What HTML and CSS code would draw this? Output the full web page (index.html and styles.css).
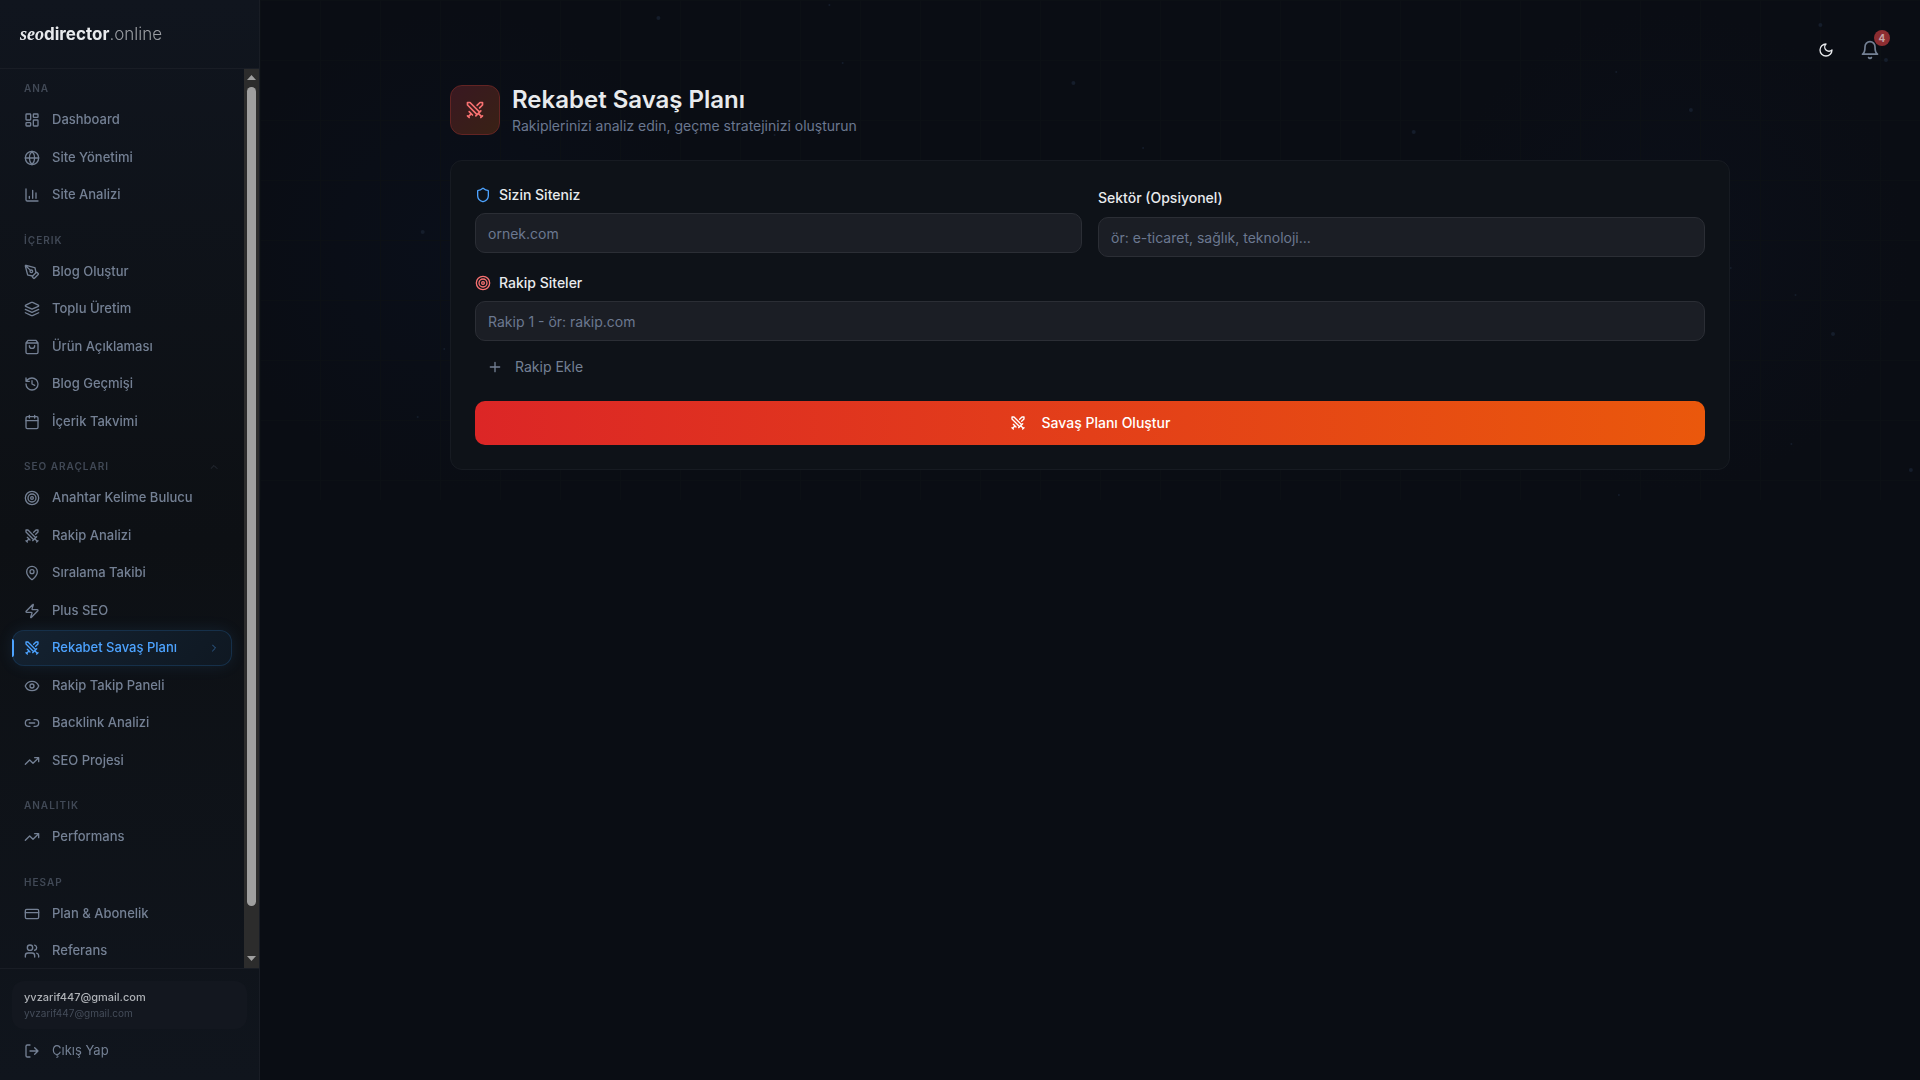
FILE: index.html
```html
<!DOCTYPE html>
<html lang="tr">
<head>
<meta charset="utf-8">
<meta name="viewport" content="width=device-width, initial-scale=1">
<title>Rekabet Savaş Planı</title>
<link rel="stylesheet" href="styles.css">
</head>
<body>
<svg class="sprite" aria-hidden="true">
  <symbol id="dashboard" viewBox="0 0 24 24"><rect x="3" y="3" width="7" height="9" rx="1"/><rect x="14" y="3" width="7" height="5" rx="1"/><rect x="14" y="12" width="7" height="9" rx="1"/><rect x="3" y="16" width="7" height="5" rx="1"/></symbol>
  <symbol id="globe" viewBox="0 0 24 24"><circle cx="12" cy="12" r="10"/><path d="M12 2a14.5 14.5 0 0 0 0 20 14.5 14.5 0 0 0 0-20M2 12h20"/></symbol>
  <symbol id="chart" viewBox="0 0 24 24"><path d="M3 3v16a2 2 0 0 0 2 2h16M18 17V9M13 17V5M8 17v-3"/></symbol>
  <symbol id="pen" viewBox="0 0 24 24"><path d="M15.707 21.293a1 1 0 0 1-1.414 0l-1.586-1.586a1 1 0 0 1 0-1.414l5.586-5.586a1 1 0 0 1 1.414 0l1.586 1.586a1 1 0 0 1 0 1.414z"/><path d="m18 13-1.375-6.874a1 1 0 0 0-.746-.776L3.235 2.028a1 1 0 0 0-1.207 1.207L5.35 15.879a1 1 0 0 0 .776.746L13 18M2.3 2.3l7.286 7.286"/><circle cx="11" cy="11" r="2"/></symbol>
  <symbol id="layers" viewBox="0 0 24 24"><path d="M12.83 2.18a2 2 0 0 0-1.66 0L2.6 6.08a1 1 0 0 0 0 1.83l8.58 3.91a2 2 0 0 0 1.66 0l8.58-3.9a1 1 0 0 0 0-1.83Z"/><path d="m22 17.65-9.17 4.16a2 2 0 0 1-1.66 0L2 17.65M22 12.65l-9.17 4.16a2 2 0 0 1-1.66 0L2 12.65"/></symbol>
  <symbol id="bag" viewBox="0 0 24 24"><path d="M6 2 3 6v14a2 2 0 0 0 2 2h14a2 2 0 0 0 2-2V6l-3-4ZM3 6h18M16 10a4 4 0 0 1-8 0"/></symbol>
  <symbol id="history" viewBox="0 0 24 24"><path d="M3 12a9 9 0 1 0 9-9 9.75 9.75 0 0 0-6.74 2.74L3 8M3 3v5h5M12 7v5l4 2"/></symbol>
  <symbol id="calendar" viewBox="0 0 24 24"><path d="M8 2v4M16 2v4M3 10h18"/><rect x="3" y="4" width="18" height="18" rx="2"/></symbol>
  <symbol id="target" viewBox="0 0 24 24"><circle cx="12" cy="12" r="10"/><circle cx="12" cy="12" r="6"/><circle cx="12" cy="12" r="2"/></symbol>
  <symbol id="swords" viewBox="0 0 24 24"><path d="M14.5 17.5 3 6V3h3l11.5 11.5M13 19l6-6M16 16l4 4M19 21l2-2M14.5 6.5 18 3h3v3l-3.5 3.5M5 14l4 4M7 17l-3 3M3 19l2 2"/></symbol>
  <symbol id="pin" viewBox="0 0 24 24"><path d="M20 10c0 4.993-5.539 10.193-7.399 11.799a1 1 0 0 1-1.202 0C9.539 20.193 4 14.993 4 10a8 8 0 0 1 16 0"/><circle cx="12" cy="10" r="3"/></symbol>
  <symbol id="zap" viewBox="0 0 24 24"><path d="M4 14a1 1 0 0 1-.78-1.63l9.9-10.2a.5.5 0 0 1 .86.46l-1.92 6.02A1 1 0 0 0 13 10h7a1 1 0 0 1 .78 1.63l-9.9 10.2a.5.5 0 0 1-.86-.46l1.92-6.02A1 1 0 0 0 11 14z"/></symbol>
  <symbol id="eye" viewBox="0 0 24 24"><path d="M2.062 12.348a1 1 0 0 1 0-.696 10.75 10.75 0 0 1 19.876 0 1 1 0 0 1 0 .696 10.75 10.75 0 0 1-19.876 0"/><circle cx="12" cy="12" r="3"/></symbol>
  <symbol id="chain" viewBox="0 0 24 24"><path d="M9 17H7A5 5 0 0 1 7 7h2M15 7h2a5 5 0 1 1 0 10h-2M8 12h8"/></symbol>
  <symbol id="trend" viewBox="0 0 24 24"><path d="m22 7-8.500 8.500-5-5L2 17M16 7h6v6"/></symbol>
  <symbol id="card" viewBox="0 0 24 24"><rect x="2" y="5" width="20" height="14" rx="2"/><path d="M2 10h20"/></symbol>
  <symbol id="users" viewBox="0 0 24 24"><path d="M16 21v-2a4 4 0 0 0-4-4H6a4 4 0 0 0-4 4v2"/><circle cx="9" cy="7" r="4"/><path d="M22 21v-2a4 4 0 0 0-3-3.87M16 3.13a4 4 0 0 1 0 7.75"/></symbol>
  <symbol id="logout" viewBox="0 0 24 24"><path d="M9 21H5a2 2 0 0 1-2-2V5a2 2 0 0 1 2-2h4M16 17l5-5-5-5M21 12H9"/></symbol>
  <symbol id="up" viewBox="0 0 24 24"><path d="m18 15-6-6-6 6"/></symbol>
  <symbol id="right" viewBox="0 0 24 24"><path d="m9 18 6-6-6-6"/></symbol>
  <symbol id="shield" viewBox="0 0 24 24"><path d="M20 13c0 5-3.500 7.500-7.660 8.950a1 1 0 0 1-.67-.01C7.500 20.500 4 18 4 13V6a1 1 0 0 1 1-1c2 0 4.500-1.200 6.240-2.720a1.170 1.170 0 0 1 1.520 0C14.510 3.810 17 5 19 5a1 1 0 0 1 1 1z"/></symbol>
  <symbol id="plus" viewBox="0 0 24 24"><path d="M5 12h14M12 5v14"/></symbol>
  <symbol id="moon" viewBox="0 0 24 24"><path d="M12 3a6 6 0 0 0 9 9 9 9 0 1 1-9-9Z"/></symbol>
  <symbol id="bell" viewBox="0 0 24 24"><path d="M6 8a6 6 0 0 1 12 0c0 7 3 9 3 9H3s3-2 3-9M10.300 21a1.940 1.940 0 0 0 3.400 0"/></symbol>
</svg>

<div class="app">
  <aside class="sidebar">
    <div class="brand"><a class="logo" href="#"><em>seo</em><b>director</b><span>.online</span></a></div>
    <div class="nav-wrap">
      <nav class="nav">
        <section class="group">
          <h2 class="group-title">ANA</h2>
          <a class="item" href="#"><svg class="icon"><use href="#dashboard"/></svg>Dashboard</a>
          <a class="item" href="#"><svg class="icon"><use href="#globe"/></svg>Site Yönetimi</a>
          <a class="item" href="#"><svg class="icon"><use href="#chart"/></svg>Site Analizi</a>
        </section>
        <section class="group">
          <h2 class="group-title">İÇERIK</h2>
          <a class="item" href="#"><svg class="icon"><use href="#pen"/></svg>Blog Oluştur</a>
          <a class="item" href="#"><svg class="icon"><use href="#layers"/></svg>Toplu Üretim</a>
          <a class="item" href="#"><svg class="icon"><use href="#bag"/></svg>Ürün Açıklaması</a>
          <a class="item" href="#"><svg class="icon"><use href="#history"/></svg>Blog Geçmişi</a>
          <a class="item" href="#"><svg class="icon"><use href="#calendar"/></svg>İçerik Takvimi</a>
        </section>
        <section class="group">
          <h2 class="group-title"><button class="group-toggle" type="button" aria-expanded="true">SEO ARAÇLARI<svg class="icon chevron"><use href="#up"/></svg></button></h2>
          <a class="item" href="#"><svg class="icon"><use href="#target"/></svg>Anahtar Kelime Bulucu</a>
          <a class="item" href="#"><svg class="icon"><use href="#swords"/></svg>Rakip Analizi</a>
          <a class="item" href="#"><svg class="icon"><use href="#pin"/></svg>Sıralama Takibi</a>
          <a class="item" href="#"><svg class="icon"><use href="#zap"/></svg>Plus SEO</a>
          <a class="item active" href="#" aria-current="page"><svg class="icon"><use href="#swords"/></svg>Rekabet Savaş Planı<svg class="icon chevron"><use href="#right"/></svg></a>
          <a class="item" href="#"><svg class="icon"><use href="#eye"/></svg>Rakip Takip Paneli</a>
          <a class="item" href="#"><svg class="icon"><use href="#chain"/></svg>Backlink Analizi</a>
          <a class="item" href="#"><svg class="icon"><use href="#trend"/></svg>SEO Projesi</a>
        </section>
        <section class="group">
          <h2 class="group-title">ANALITIK</h2>
          <a class="item" href="#"><svg class="icon"><use href="#trend"/></svg>Performans</a>
        </section>
        <section class="group">
          <h2 class="group-title">HESAP</h2>
          <a class="item" href="#"><svg class="icon"><use href="#card"/></svg>Plan &amp; Abonelik</a>
          <a class="item" href="#"><svg class="icon"><use href="#users"/></svg>Referans</a>
        </section>
      </nav>
      <div class="scrollbar" aria-hidden="true">
        <svg class="arrow" viewBox="0 0 9 5"><path d="M0 5 4.500 0 9 5z"/></svg>
        <div class="track"><div class="thumb"></div></div>
        <svg class="arrow" viewBox="0 0 9 5"><path d="M0 0h9L4.500 5z"/></svg>
      </div>
    </div>
    <div class="account">
      <div class="profile">
        <div class="profile-name">yvzarif447@gmail.com</div>
        <div class="profile-mail">yvzarif447@gmail.com</div>
      </div>
      <button class="item logout" type="button"><svg class="icon"><use href="#logout"/></svg>Çıkış Yap</button>
    </div>
  </aside>

  <main class="main">
    <svg class="backdrop" aria-hidden="true">
      <circle cx="24%" cy="18" r="2"/><circle cx="34.300%" cy="5" r="1"/><circle cx="49%" cy="83" r="2"/>
      <circle cx="9.800%" cy="232" r="2"/><circle cx="9.500%" cy="417" r="1"/><circle cx="11.100%" cy="349" r="1"/>
      <circle cx="35.100%" cy="63" r="1"/><circle cx="31%" cy="135" r="1"/><circle cx="53.200%" cy="148" r="1"/>
      <circle cx="69.500%" cy="132" r="2"/><circle cx="81.700%" cy="72" r="1"/><circle cx="86.200%" cy="110" r="2"/>
      <circle cx="94%" cy="25" r="2"/><circle cx="97.950%" cy="60" r="2"/><circle cx="88.600%" cy="268" r="1"/>
      <circle cx="92.500%" cy="295" r="1"/><circle cx="94.760%" cy="334" r="2"/><circle cx="92.250%" cy="444" r="1"/>
      <circle cx="99.450%" cy="470" r="2"/><circle cx="81.860%" cy="495" r="1"/>
    </svg>
    <div class="topbar">
      <button class="icon-btn light" type="button" aria-label="Tema"><svg class="icon"><use href="#moon"/></svg></button>
      <button class="icon-btn" type="button" aria-label="Bildirimler"><svg class="icon icon-lg"><use href="#bell"/></svg><span class="badge">4</span></button>
    </div>
    <div class="content">
      <header class="page-head">
        <div class="page-icon"><svg class="icon icon-lg"><use href="#swords"/></svg></div>
        <div>
          <h1 class="page-title">Rekabet Savaş Planı</h1>
          <p class="page-sub">Rakiplerinizi analiz edin, geçme stratejinizi oluşturun</p>
        </div>
      </header>
      <form class="panel">
        <div class="fields">
          <div>
            <label class="label" for="site"><svg class="icon blue"><use href="#shield"/></svg>Sizin Siteniz</label>
            <input class="input" id="site" type="text" placeholder="ornek.com">
          </div>
          <div>
            <label class="label plain" for="sector">Sektör (Opsiyonel)</label>
            <input class="input" id="sector" type="text" placeholder="ör: e-ticaret, sağlık, teknoloji...">
          </div>
        </div>
        <div>
          <label class="label" for="rival"><svg class="icon red"><use href="#target"/></svg>Rakip Siteler</label>
          <input class="input" id="rival" type="text" placeholder="Rakip 1 - ör: rakip.com">
          <button class="add" type="button"><svg class="icon"><use href="#plus"/></svg>Rakip Ekle</button>
        </div>
        <button class="submit" type="button"><svg class="icon"><use href="#swords"/></svg>Savaş Planı Oluştur</button>
      </form>
    </div>
  </main>
</div>
</body>
</html>
```

FILE: styles.css
```css
*, *::before, *::after { box-sizing: border-box; }

:root { color-scheme: dark; }

body {
  margin: 0;
  background: #0a0d14;
  color: #e8eaed;
  font: 400 16px/1.5 Inter, "Liberation Sans", sans-serif;
}

h1, h2, p { margin: 0; }
a { color: inherit; text-decoration: none; }
button { font: inherit; color: inherit; background: none; border: 0; padding: 0; cursor: pointer; }

.sprite { display: none; }

.icon {
  flex: none;
  width: 16px;
  height: 16px;
  fill: none;
  stroke: currentColor;
  stroke-width: 2;
  stroke-linecap: round;
  stroke-linejoin: round;
}
.icon-lg { width: 20px; height: 20px; }
.blue { color: #4da3ff; }
.red { color: #f87171; }

.app { display: flex; min-height: 100vh; }

/* Sidebar */
.sidebar {
  position: sticky;
  top: 0;
  flex: none;
  display: flex;
  flex-direction: column;
  width: 260px;
  height: 100vh;
  background: linear-gradient(180deg, #10151e 0%, #0d1014 50%, #10151d 100%);
  border-right: 1px solid #191d25;
  will-change: transform;
}

.brand {
  flex: none;
  display: flex;
  align-items: center;
  height: 69px;
  padding: 0 20px;
  border-bottom: 1px solid #191d25;
}
.logo { font-size: 17px; line-height: 24px; color: #e8eaed; }
.logo em { font-family: "Liberation Serif", serif; font-size: 18px; font-weight: 700; }
.logo b { font-weight: 700; }
.logo span { font-weight: 300; color: #9a9da2; }

.nav-wrap { flex: 1; display: flex; min-height: 0; }
.nav {
  flex: 1;
  min-width: 0;
  overflow-y: auto;
  scrollbar-width: none;
  padding: 12px 12px 56px;
}
.scrollbar {
  flex: none;
  display: flex;
  flex-direction: column;
  align-items: center;
  gap: 7px;
  width: 15px;
  padding: 6px 0 7px;
  background: #2c2c2c;
}
.arrow { width: 9px; height: 5px; fill: #9f9f9f; }
.track { flex: 1; width: 9px; }
.thumb { height: 95%; border-radius: 5px; background: #9f9f9f; }

.group { display: flex; flex-direction: column; gap: 2px; }
.group + .group { margin-top: 20px; }
.group-title {
  margin-bottom: 4px;
  padding: 0 12px;
  font-size: 10px;
  font-weight: 600;
  letter-spacing: 1px;
  color: #414956;
}
.group-toggle {
  display: flex;
  align-items: center;
  justify-content: space-between;
  width: 100%;
  letter-spacing: inherit;
}
.chevron { width: 12px; height: 12px; margin-left: auto; opacity: .5; }

.item {
  position: relative;
  display: flex;
  align-items: center;
  gap: 12px;
  width: 100%;
  padding: 8px 12px;
  border-radius: 12px;
  font-size: 13px;
  font-weight: 500;
  color: #748094;
  will-change: transform;
}
.item.active {
  color: #4da3ff;
  background: linear-gradient(135deg, #142231, #0f1822);
  box-shadow: inset 0 0 0 1px #16304a, 0 0 16px rgba(77, 163, 255, .1);
}
.item.active::before {
  content: "";
  position: absolute;
  left: 0;
  top: 9px;
  width: 2px;
  height: 18px;
  border-radius: 0 2px 2px 0;
  background: #4da3ff;
}

.account {
  flex: none;
  display: flex;
  flex-direction: column;
  gap: 4px;
  padding: 12px;
  border-top: 1px solid #191d25;
}
.profile { padding: 8px 12px; border-radius: 12px; background: #13171f; }
.profile-name { font-size: 11px; font-weight: 500; color: #aeb1b6; }
.profile-mail { font-size: 10px; color: #454d5a; }
.logout { font-weight: 400; }

/* Main column */
.main { position: relative; flex: 1; min-width: 0; }

.backdrop {
  position: absolute;
  inset: 0 0 auto;
  z-index: -1;
  width: 100%;
  height: 500px;
  fill: #151d2b;
  background:
    repeating-linear-gradient(90deg, #0c1015 0 1px, transparent 1px 60px),
    repeating-linear-gradient(180deg, #0c1015 0 1px, transparent 1px 60px),
    radial-gradient(circle at 12% 250px, #0a0f1a, transparent 240px),
    radial-gradient(circle at 85% 250px, #0b0f19, transparent 240px);
}

.topbar {
  display: flex;
  justify-content: flex-end;
  gap: 4px;
  padding: 30px 30px 14px;
}
.icon-btn {
  position: relative;
  display: grid;
  place-items: center;
  width: 40px;
  height: 40px;
  color: #748094;
}
.icon-btn.light { color: #e8eaed; }
.badge {
  position: absolute;
  top: 0;
  right: 0;
  width: 16px;
  height: 16px;
  border-radius: 8px;
  background: #8d2d31;
  color: #c4a5a8;
  font-size: 10px;
  font-weight: 700;
  line-height: 16px;
}

.content { max-width: 1328px; margin: 0 auto; padding: 0 24px 24px; }

.page-head { display: flex; align-items: center; gap: 12px; margin-bottom: 24px; }
.page-icon {
  display: grid;
  place-items: center;
  width: 50px;
  height: 50px;
  border: 1px solid #632423;
  border-radius: 12px;
  background: linear-gradient(135deg, #391821, #392115);
  color: #f87171;
}
.page-title { font-size: 24px; line-height: 32px; font-weight: 600; }
.page-sub { font-size: 14px; line-height: 20px; color: #6b7890; }

.panel {
  display: flex;
  flex-direction: column;
  gap: 16px;
  padding: 24px;
  border: 1px solid #171b22;
  border-radius: 12px;
  background: #0e1218;
}
.fields { display: grid; grid-template-columns: 1fr 1fr; gap: 16px; }
.label {
  display: flex;
  align-items: center;
  gap: 8px;
  font-size: 14px;
  line-height: 20px;
  font-weight: 500;
}
.label.plain { display: inline; }
.input {
  display: block;
  width: 100%;
  height: 40px;
  margin-top: 8px;
  padding: 0 12px;
  border: 1px solid #2b2e35;
  border-radius: 10px;
  background: #1b1e25;
  color: #e8eaed;
  font: inherit;
  font-size: 14px;
}
.input::placeholder { color: #6b7890; opacity: 1; }
.add {
  display: flex;
  align-items: center;
  gap: 12px;
  height: 36px;
  margin-top: 8px;
  padding: 0 12px;
  font-size: 14px;
  line-height: 20px;
  color: #748094;
}
.submit {
  display: flex;
  align-items: center;
  justify-content: center;
  gap: 16px;
  height: 44px;
  border-radius: 10px;
  background: linear-gradient(90deg, #dc2626, #ea580c);
  color: #fff;
  font-size: 14px;
  line-height: 20px;
  font-weight: 500;
}
```
